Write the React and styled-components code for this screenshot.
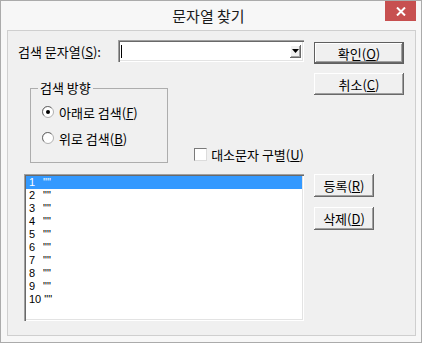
import React from "react";
import styled, { createGlobalStyle } from "styled-components";

const GlobalStyle = createGlobalStyle`
  html, body {
    margin: 0;
    padding: 0;
    background: #ffffff;
  }
  * {
    box-sizing: border-box;
  }
`;

const FONT = `"Noto Sans CJK KR", "Liberation Sans", sans-serif`;

const Window = styled.div`
  width: 422px;
  height: 343px;
  border: 1px solid #ababab;
  background: #f7f7f7;
  display: flex;
  flex-direction: column;
  font-family: ${FONT};
  font-size: 13px;
  color: #000;
`;

const TitleBar = styled.div`
  height: 29px;
  display: grid;
  grid-template-columns: 1fr auto 1fr;
  padding-right: 5px;
`;

const Title = styled.div`
  font-size: 15px;
  line-height: 29px;
  color: #1a1a1a;
`;

const CloseButton = styled.div`
  justify-self: end;
  width: 31px;
  height: 20px;
  background: #c75050;
  display: flex;
  align-items: center;
  justify-content: center;
`;

const Client = styled.div`
  flex: 1;
  margin: 0 5px 6px 6px;
  border: 1px solid #cfcfcf;
  background: #f0f0f0;
  display: grid;
  grid-template-columns: 296px 90px;
  grid-template-rows: 143px 1fr;
  column-gap: 10px;
`;

const TopLeft = styled.div`
  padding-top: 9px;
  display: flex;
  flex-direction: column;
`;

const SearchRow = styled.div`
  display: flex;
  align-items: center;
  height: 22px;
`;

const Label = styled.span`
  width: ${(p) => p.$w || "auto"};
  margin-left: ${(p) => p.$ml || 0}px;
  white-space: nowrap;
  line-height: 15px;
`;

const Combo = styled.div`
  width: 186px;
  height: 22px;
  background: #fff;
  box-shadow: inset 1px 1px #a0a0a0, inset 2px 2px #696969,
    inset -1px -1px #fff, inset -2px -2px #e3e3e3;
  display: flex;
  align-items: center;
  justify-content: space-between;
  padding: 0 3px 0 3px;
`;

const Caret = styled.div`
  width: 1px;
  height: 13px;
  background: #000;
`;

const DropButton = styled.div`
  width: 11px;
  height: 13px;
  background: #f0f0f0;
  box-shadow: inset -1px -1px #696969, inset 1px 1px #fff,
    inset -2px -2px #a0a0a0;
  display: flex;
  align-items: center;
  justify-content: center;
`;

const GroupRow = styled.div`
  display: flex;
  align-items: flex-end;
  margin-top: 20px;
`;

const GroupBox = styled.fieldset`
  margin: 0 0 0 22px;
  width: 141px;
  border: 1px solid #adadad;
  padding: 0 0 16px 11px;
  display: flex;
  flex-direction: column;
  gap: 10px;
`;

const Legend = styled.legend`
  padding: 0 2px;
  margin-left: -4px;
  line-height: 12px;
  margin-bottom: 10px;
`;

const Option = styled.div`
  display: flex;
  align-items: center;
  gap: 5px;
  height: 16px;
`;

const CheckRow = styled.div`
  display: flex;
  align-items: center;
  gap: 4px;
  margin: 0 0 1px 26px;
`;

const CheckBox = styled.div`
  width: 13px;
  height: 13px;
  background: #fff;
  border: 1px solid;
  border-color: #7a7a7a #dcdcdc #dcdcdc #7a7a7a;
`;

const ButtonColumn = styled.div`
  display: flex;
  flex-direction: column;
  gap: ${(p) => p.$gap}px;
  padding-top: ${(p) => p.$pt || 0}px;
`;

const Button = styled.div`
  width: ${(p) => p.$w}px;
  height: ${(p) => p.$h || 22}px;
  background: #f0f0f0;
  display: flex;
  align-items: center;
  justify-content: center;
  line-height: 15px;
  box-shadow: ${(p) =>
    p.$default
      ? "inset 0 0 0 1px #5f5f5f, inset -2px -2px #696969, inset 2px 2px #fff, inset -3px -3px #a0a0a0"
      : "inset -1px -1px #696969, inset 1px 1px #fff, inset -2px -2px #a0a0a0"};
`;

const List = styled.div`
  margin-left: 16px;
  width: 280px;
  height: 147px;
  background: #fff;
  padding: 2px;
  box-shadow: inset 1px 1px #a0a0a0, inset 2px 2px #696969,
    inset -1px -1px #fff, inset -2px -2px #e3e3e3;
`;

const ListRow = styled.div`
  height: 13px;
  line-height: 13px;
  padding-left: 3px;
  font-family: "Liberation Sans", sans-serif;
  font-size: 11px;
  white-space: pre;
  background: ${(p) => (p.$selected ? "#3399ff" : "transparent")};
  color: ${(p) => (p.$selected ? "#fff" : "#000")};
`;

const RowNumber = styled.span`
  display: inline-block;
  min-width: 11px;
  margin-right: 3px;
`;

const Radio = ({ checked }) => (
  <svg width="12" height="12" viewBox="0 0 12 12">
    <circle cx="6" cy="6" r="5.5" fill="#fff" stroke="#b0b0b0" />
    <path d="M2 9.5 A5 5 0 0 1 9.5 2" fill="none" stroke="#707070" />
    {checked && <circle cx="6" cy="6" r="2" fill="#000" />}
  </svg>
);

const Mn = ({ text, k }) => (
  <>
    {text}(<u>{k}</u>)
  </>
);

export default function App() {
  const rows = Array.from({ length: 10 }, (_, i) => i + 1);
  return (
    <>
      <GlobalStyle />
      <Window>
        <TitleBar>
          <span />
          <Title>문자열 찾기</Title>
          <CloseButton>
            <svg width="10" height="9" viewBox="0 0 10 9">
              <path d="M1 0.5 L9 8.5 M9 0.5 L1 8.5" stroke="#fff" strokeWidth="2" />
            </svg>
          </CloseButton>
        </TitleBar>
        <Client>
          <TopLeft>
            <SearchRow>
              <Label $w="100px" $ml={10}>
                <Mn text="검색 문자열" k="S" />:
              </Label>
              <Combo>
                <Caret />
                <DropButton>
                  <svg width="7" height="4" viewBox="0 0 7 4">
                    <path d="M0 0 H7 L3.5 4 Z" fill="#000" />
                  </svg>
                </DropButton>
              </Combo>
            </SearchRow>
            <GroupRow>
              <GroupBox>
                <Legend>검색 방향</Legend>
                <Option>
                  <Radio checked />
                  <Label>
                    <Mn text="아래로 검색" k="F" />
                  </Label>
                </Option>
                <Option>
                  <Radio />
                  <Label>
                    <Mn text="위로 검색" k="B" />
                  </Label>
                </Option>
              </GroupBox>
              <CheckRow>
                <CheckBox />
                <Label>
                  <Mn text="대소문자 구별" k="U" />
                </Label>
              </CheckRow>
            </GroupRow>
          </TopLeft>
          <ButtonColumn $gap={9} $pt={11}>
            <Button $w={90} $default>
              <Mn text="확인" k="O" />
            </Button>
            <Button $w={90}>
              <Mn text="취소" k="C" />
            </Button>
          </ButtonColumn>
          <List>
            {rows.map((n) => (
              <ListRow key={n} $selected={n === 1}>
                <RowNumber>{n}</RowNumber>
                {`""`}
              </ListRow>
            ))}
          </List>
          <ButtonColumn $gap={10}>
            <Button $w={60} $h={23}>
              <Mn text="등록" k="R" />
            </Button>
            <Button $w={60} $h={23}>
              <Mn text="삭제" k="D" />
            </Button>
          </ButtonColumn>
        </Client>
      </Window>
    </>
  );
}
